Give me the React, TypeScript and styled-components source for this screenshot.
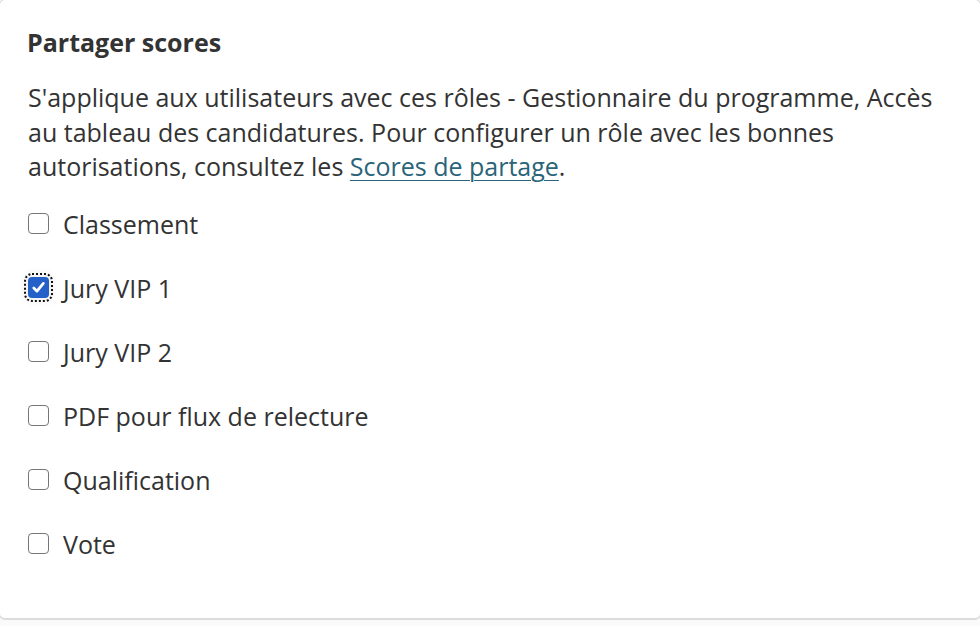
import React, { useState } from 'react';
import styled, { createGlobalStyle } from 'styled-components';

const GlobalStyle = createGlobalStyle`
  html, body {
    margin: 0;
    padding: 0;
    background: #fafafa;
    font-family: "Open Sans", "Noto Sans", sans-serif;
    color: #333;
  }
  * { box-sizing: border-box; }
`;

const Card = styled.section`
  width: 982px;
  height: 621px;
  margin-left: -1px;
  margin-top: -1px;
  background: #fff;
  border: 1px solid #dcdcdc;
  border-bottom-width: 2px;
  border-radius: 6px;
  padding: 25px 28px 0 28px;
`;

const Title = styled.h2`
  margin: 0 0 0 -1px;
  font-size: 25px;
  font-weight: 700;
  line-height: 34px;
  color: #333;
`;

const Description = styled.p`
  margin: 21px 0 0;
  font-size: 25px;
  line-height: 34.5px;
  color: #333;
  max-width: 925px;
`;

const DocLink = styled.a`
  color: #2a6478;
  text-decoration: underline;
  text-decoration-thickness: 1px;
  text-underline-offset: 4px;
`;

const Options = styled.div`
  display: flex;
  flex-direction: column;
  gap: 30px;
  margin-top: 23px;
`;

const Option = styled.label`
  display: flex;
  align-items: center;
  gap: 14px;
  height: 34px;
  font-size: 25px;
  line-height: 34px;
  color: #333;
  cursor: pointer;
`;

const HiddenInput = styled.input`
  position: absolute;
  opacity: 0;
  width: 0;
  height: 0;
`;

const Box = styled.span<{ $checked: boolean }>`
  flex: none;
  width: 21px;
  height: 21px;
  border-radius: 4px;
  display: flex;
  align-items: center;
  justify-content: center;
  background: ${p => (p.$checked ? '#2460c8' : '#fff')};
  border: ${p => (p.$checked ? 'none' : '1.5px solid #767676')};
  box-shadow: ${p => (p.$checked ? '0 0 10px 3px rgba(0, 0, 0, 0.07)' : 'none')};
  outline: ${p => (p.$checked ? '2px dotted #111' : 'none')};
  outline-offset: 2px;
`;

const options = [
  'Classement',
  'Jury VIP 1',
  'Jury VIP 2',
  'PDF pour flux de relecture',
  'Qualification',
  'Vote',
];

export default function App() {
  const [checked, setChecked] = useState<string[]>(['Jury VIP 1']);

  const toggle = (name: string) =>
    setChecked(prev => (prev.includes(name) ? prev.filter(n => n !== name) : [...prev, name]));

  return (
    <>
      <GlobalStyle />
      <Card>
        <Title>Partager scores</Title>
        <Description>
          S'applique aux utilisateurs avec ces rôles - Gestionnaire du programme, Accès au tableau des
          candidatures. Pour configurer un rôle avec les bonnes autorisations, consultez les{' '}
          <DocLink href="#">Scores de partage</DocLink>.
        </Description>
        <Options>
          {options.map(name => {
            const on = checked.includes(name);
            return (
              <Option key={name}>
                <HiddenInput type="checkbox" checked={on} onChange={() => toggle(name)} />
                <Box $checked={on}>
                  {on && (
                    <svg width="15" height="15" viewBox="0 0 14 14">
                      <path
                        d="M2.6 7.4 L5.6 10.4 L11.5 3.2"
                        fill="none"
                        stroke="#fff"
                        strokeWidth="2.6"
                        strokeLinecap="round"
                        strokeLinejoin="round"
                      />
                    </svg>
                  )}
                </Box>
                {name}
              </Option>
            );
          })}
        </Options>
      </Card>
    </>
  );
}
